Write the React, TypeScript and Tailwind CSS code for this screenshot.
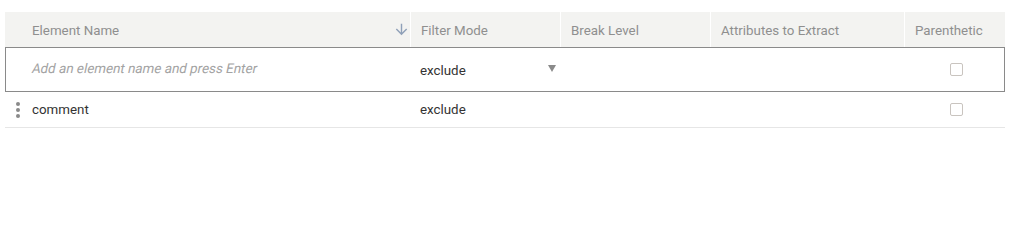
const cols = "grid grid-cols-[405px_150px_150px_194px_100px]";

function SortArrow() {
  return (
    <svg viewBox="0 0 24 24" className="mb-[3px] mr-[-2px] h-[17px] w-[17px] fill-[#8fa0b8]">
      <path d="M20 12l-1.41-1.41L13 16.17V4h-2v12.17l-5.58-5.59L4 12l8 8 8-8z" />
    </svg>
  );
}

function Checkbox() {
  return <span className="block h-[13px] w-[13px] rounded-[2px] border border-[#c9c4bf] bg-white" />;
}

function DragHandle() {
  return (
    <span className="flex flex-col gap-[2px]">
      <span className="h-[4px] w-[4px] rounded-full bg-[#8a8a8a]" />
      <span className="h-[4px] w-[4px] rounded-full bg-[#8a8a8a]" />
      <span className="h-[4px] w-[4px] rounded-full bg-[#8a8a8a]" />
    </span>
  );
}

export default function App() {
  return (
    <div className="h-[236px] w-[1021px] bg-white pl-[5px] pt-[12px] font-['Roboto',sans-serif] text-[13.33px]">
      <div className="w-[1000px]">
        {/* header */}
        <div className={`${cols} h-[35px] bg-[#f3f3f1] text-[#8f8f8f]`}>
          <div className="flex items-center justify-between pl-[27px] pr-[2px] pt-[3px]">
            <span>Element Name</span>
            <SortArrow />
          </div>
          <div className="flex items-center border-l border-white pl-[10px] pt-[3px]">Filter Mode</div>
          <div className="flex items-center border-l border-white pl-[10px] pt-[3px]">Break Level</div>
          <div className="flex items-center border-l border-white pl-[10px] pt-[3px]">Attributes to Extract</div>
          <div className="flex items-center border-l border-white pl-[10px] pt-[3px]">Parenthetic</div>
        </div>

        {/* new element row */}
        <div className={`${cols} h-[45px] border border-[#8a8a8a]`}>
          <div className="flex items-center pb-[2px] pl-[26px] text-[#a3a3a3]">
            <span className="inline-block -skew-x-12">Add an element name and press Enter</span>
          </div>
          <div className="flex items-center justify-between pl-[9px] pr-[5px] pt-[2px] text-[#333]">
            <span>exclude</span>
            <span className="mb-[4px] h-0 w-0 border-x-[4px] border-t-[7px] border-x-transparent border-t-[#8a8a8a]" />
          </div>
          <div />
          <div />
          <div className="flex items-center pb-[1px] pl-[45px]">
            <Checkbox />
          </div>
        </div>

        {/* data row */}
        <div className={`${cols} h-[36px] border-b border-[#e6e6e6] text-[#333]`}>
          <div className="flex items-center pl-[11px]">
            <DragHandle />
            <span className="pl-[12px]">comment</span>
          </div>
          <div className="flex items-center pl-[10px]">exclude</div>
          <div />
          <div />
          <div className="flex items-center pl-[46px]">
            <Checkbox />
          </div>
        </div>
      </div>
    </div>
  );
}
